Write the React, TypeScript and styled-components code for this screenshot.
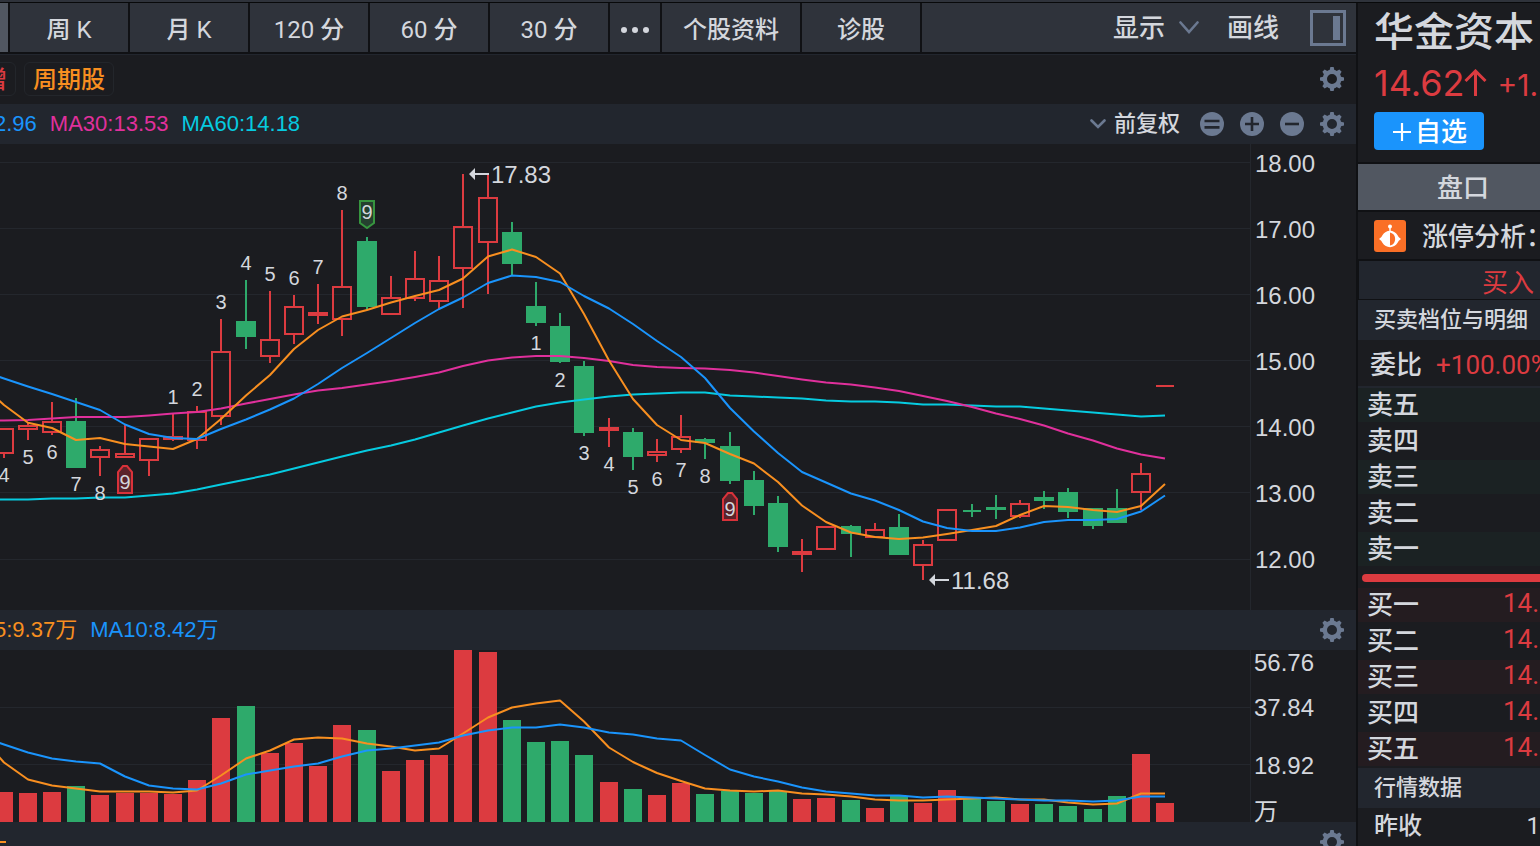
import React from 'react';
import styled, { createGlobalStyle } from 'styled-components';

const color = {
  base: '#1b1c20',
  bar: '#22262e',
  toolbar: '#2f333b',
  edge: '#101114',
  active: '#515761',
  grid: '#24272d',
  text: '#d4d7dd',
  icon: '#6b7991',
  red: '#dc3b40',
  green: '#2eaa6b',
  orange: '#f88f20',
  blue: '#1a94fc',
  magenta: '#e0309c',
  cyan: '#06cbe0',
};

const helvetica = '"Liberation Sans", "Noto Sans CJK SC", sans-serif';
const roboto = 'Roboto, "Noto Sans CJK SC", sans-serif';
const inter = 'Inter, "Noto Sans CJK SC", sans-serif';

const GlobalStyle = createGlobalStyle`
  *, *::before, *::after { box-sizing: border-box; }
  body {
    margin: 0;
    background: ${color.base};
    color: ${color.text};
    font-family: ${roboto};
    font-weight: 500;
  }
  button { font: inherit; color: inherit; border: 0; padding: 0; background: none; cursor: pointer; }
  svg { flex: none; }
`;

/* ---------- frame ---------- */

const Page = styled.div`
  display: flex;
  flex-direction: column;
  height: 100vh;
  overflow: hidden;
`;

const TopEdge = styled.div`
  flex: none;
  height: 3px;
  background: ${color.toolbar};
  border-bottom: 1px solid #08090a;
`;

const Body = styled.div`
  flex: 1;
  display: flex;
  min-height: 0;
`;

const Main = styled.main`
  flex: 1;
  min-width: 0;
  overflow: hidden;
`;

const Side = styled.aside`
  flex: 0 0 184px;
  overflow: hidden;
  white-space: nowrap;
  border-left: 2px solid ${color.edge};
`;

/* ---------- toolbar ---------- */

const Toolbar = styled.nav`
  display: flex;
  height: 51px;
  background: ${color.toolbar};
  border-bottom: 2px solid ${color.edge};
`;

const Tab = styled.button<{ $width: number; $active?: boolean }>`
  flex: none;
  display: flex;
  align-items: center;
  justify-content: center;
  gap: 6px;
  width: ${(p) => p.$width}px;
  padding-top: 4px;
  border-right: 2px solid ${color.edge};
  background: ${(p) => (p.$active ? color.active : 'transparent')};
  font-size: 24px;
  line-height: 40px;
`;

const Latin = styled.span`
  font-weight: 400;
`;

const ToolbarEnd = styled.div`
  display: flex;
  align-items: center;
  margin-left: auto;
  padding-right: 10px;
  font-size: 26px;
  line-height: 48px;
`;

const ToolButton = styled.button<{ $space: number }>`
  display: flex;
  align-items: center;
  gap: 14px;
  margin-right: ${(p) => p.$space}px;
`;

const PlainButton = styled.button`
  display: flex;
`;

/* ---------- bars ---------- */

const TagRow = styled.div`
  display: flex;
  align-items: center;
  gap: 8px;
  height: 50px;
  padding: 0 12px 2px 0;
  border-top: 1px solid ${color.bar};
`;

const Tag = styled.span<{ $color: string; $cut?: boolean }>`
  margin-left: ${(p) => (p.$cut ? '-26px' : '0')};
  padding: 2px 8px 0;
  border: 1px solid #23262b;
  border-radius: 6px;
  color: ${(p) => p.$color};
  font-size: 24px;
  line-height: 30px;
`;

const Bar = styled.div`
  display: flex;
  align-items: center;
  height: 40px;
  padding-right: 12px;
  background: ${color.bar};
`;

const Legend = styled.div`
  display: flex;
  gap: 13px;
  margin-left: -6px;
  font-family: ${helvetica};
  font-size: 22px;
  font-weight: 400;
  line-height: 40px;
  white-space: nowrap;
`;

const LegendItem = styled.span<{ $color: string }>`
  color: ${(p) => p.$color};
`;

const LegendDash = styled.span`
  width: 6px;
  height: 2px;
  background: ${color.orange};
`;

const BarEnd = styled.div`
  display: flex;
  align-items: center;
  gap: 16px;
  margin-left: auto;
`;

const AdjustButton = styled.button`
  display: flex;
  align-items: center;
  gap: 8px;
  margin-right: 4px;
  font-size: 22px;
  line-height: 38px;
`;

/* ---------- charts ---------- */

const ChartRow = styled.section`
  display: flex;
`;

const Plot = styled.div`
  flex: 1;
  min-width: 0;
  display: flex;
  justify-content: flex-end;
  overflow: hidden;
`;

const PlotSvg = styled.svg`
  display: block;
  overflow: visible;
  font-family: ${helvetica};
  font-weight: 400;
`;

const PriceAxis = styled.div`
  flex: 0 0 106px;
  display: flex;
  flex-direction: column;
  gap: 38px;
  padding: 6px 0 0 4px;
  border-left: 1px solid ${color.grid};
  font-family: ${helvetica};
  font-size: 24px;
  font-weight: 400;
  line-height: 28px;
`;

const VolumeAxis = styled.div`
  flex: 0 0 106px;
  display: grid;
  grid-template-rows: 26px 64px 52px 30px;
  align-items: center;
  padding-left: 3px;
  border-left: 1px solid ${color.grid};
  font-family: ${helvetica};
  font-size: 24px;
  font-weight: 400;
  line-height: 24px;
`;

const Unit = styled.span`
  align-self: end;
  line-height: 20px;
`;

/* ---------- side panel ---------- */

const Head = styled.header`
  padding: 0 0 12px 16px;
  border-bottom: 2px solid ${color.edge};
`;

const StockName = styled.h1`
  margin: 0;
  font-size: 40px;
  font-weight: 500;
  line-height: 60px;
`;

const PriceLine = styled.div`
  display: flex;
  align-items: baseline;
  gap: 9px;
  height: 49px;
  color: ${color.red};
  font-family: ${inter};
  font-weight: 400;
  line-height: 40px;
`;

const Price = styled.strong`
  display: flex;
  align-items: baseline;
  font-size: 36px;
  font-weight: 400;
`;

const Change = styled.span`
  font-size: 30px;
`;

const AddButton = styled.button`
  display: flex;
  align-items: center;
  justify-content: center;
  gap: 4px;
  width: 110px;
  height: 38px;
  padding: 2px 0 0 2px;
  border-radius: 4px;
  background: ${color.blue};
  color: #fff;
  font-size: 26px;
  line-height: 36px;
`;

const SideTab = styled.button`
  display: block;
  width: 100%;
  height: 48px;
  padding-left: 28px;
  border-bottom: 2px solid ${color.edge};
  background: ${color.active};
  font-size: 26px;
  line-height: 48px;
`;

const Analysis = styled.a`
  display: flex;
  align-items: center;
  gap: 16px;
  height: 49px;
  padding-left: 16px;
  border-bottom: 2px solid ${color.edge};
  color: inherit;
  font-size: 26px;
  line-height: 44px;
  text-decoration: none;
`;

const AnalysisText = styled.span`
  padding-top: 3px;
`;

const BuyButton = styled.button`
  display: block;
  width: 100%;
  height: 39px;
  padding-left: 123px;
  border-left: 1px solid ${color.edge};
  border-bottom: 1px solid ${color.edge};
  background: ${color.bar};
  color: ${color.red};
  font-size: 26px;
  font-weight: 400;
  line-height: 44px;
  text-align: left;
`;

const SectionTitle = styled.h2`
  margin: 0;
  padding-left: 16px;
  background: ${color.bar};
  font-size: 22px;
  font-weight: 500;
  line-height: 40px;
`;

const Ratio = styled.div`
  display: flex;
  gap: 14px;
  padding: 4px 0 0 12px;
  border-bottom: 2px solid ${color.bar};
  font-size: 26px;
  line-height: 42px;
`;

const Positive = styled.span`
  color: ${color.red};
  font-weight: 400;
`;

const Book = styled.table<{ $tint: string }>`
  width: 100%;
  border-spacing: 0;
  table-layout: fixed;
  font-size: 26px;
  line-height: 34px;
  th, td { padding: 0; border-bottom: 2px solid ${color.base}; text-align: left; vertical-align: top; }
  th { width: 145px; padding-left: 9px; font-weight: 500; }
  td { color: ${color.red}; font-weight: 400; line-height: 30px; }
  tr:nth-child(odd) { background: ${(p) => p.$tint}; }
`;

const Balance = styled.div`
  height: 8px;
  margin: 6px 0 6px 4px;
  border-radius: 4px 0 0 4px;
  background: ${color.red};
`;

const QuoteRow = styled.div`
  display: flex;
  justify-content: space-between;
  padding-left: 16px;
  font-size: 24px;
  line-height: 36px;
`;

/* ---------- icons ---------- */

const Gear = () => (
  <svg width="24" height="24" viewBox="-12 -12 24 24" aria-hidden="true">
    <circle r="7.2" fill="none" stroke={color.icon} strokeWidth="4.4" />
    {[0, 45, 90, 135, 180, 225, 270, 315].map((a) => (
      <path key={a} d="M-2.6 -8 L-1.6 -12 H1.6 L2.6 -8 Z" fill={color.icon} transform={`rotate(${a})`} />
    ))}
  </svg>
);

const GearButton = ({ label }: { label: string }) => (
  <PlainButton aria-label={label}>
    <Gear />
  </PlainButton>
);

const RoundButton = ({ label, d }: { label: string; d: string }) => (
  <PlainButton aria-label={label}>
    <svg width="24" height="24" viewBox="0 0 24 24" aria-hidden="true">
      <circle cx="12" cy="12" r="12" fill={color.icon} />
      <path d={d} fill="none" stroke={color.bar} strokeWidth="2.6" />
    </svg>
  </PlainButton>
);

const Chevron = ({ width, height }: { width: number; height: number }) => (
  <svg width={width} height={height} viewBox={`0 0 ${width} ${height}`} aria-hidden="true">
    <path
      d={`M1.5 1.5 L${width / 2} ${height - 2} L${width - 1.5} 1.5`}
      fill="none"
      stroke={color.icon}
      strokeWidth="2.6"
      strokeLinecap="round"
    />
  </svg>
);

const PanelIcon = () => (
  <svg width="36" height="36" viewBox="0 0 36 36" aria-hidden="true">
    <rect x="1.5" y="1.5" width="33" height="33" fill="none" stroke={color.icon} strokeWidth="3" />
    <rect x="23" y="6" width="7" height="24" fill={color.icon} />
  </svg>
);

const RobotIcon = () => (
  <svg width="32" height="32" viewBox="0 0 32 32" aria-hidden="true">
    <rect width="32" height="32" rx="3" fill="#fa6f26" />
    <circle cx="16" cy="6.4" r="2" fill="#fff" />
    <path d="M16 7 V12" stroke="#fff" strokeWidth="1.4" />
    <path
      d="M5 19 Q7.6 17.6 8.6 15 A8.6 8.6 0 0 1 23.4 15 Q24.4 17.6 27 19 Q24.4 20.4 23.4 23 A8.6 8.6 0 0 1 8.6 23 Q7.6 20.4 5 19 Z"
      fill="#fff"
    />
    <path d="M16 12.4 A6.8 6.8 0 0 1 16 25.6 Z" fill="#fa6f26" />
  </svg>
);

const UpArrow = () => (
  <svg width="24" height="27" viewBox="0 0 24 27" aria-hidden="true">
    <path d="M11.5 27 V2.5 M1.5 12 L11.5 2 L21.5 12" fill="none" stroke={color.red} strokeWidth="3" />
  </svg>
);

const PlusIcon = () => (
  <svg width="18" height="18" viewBox="0 0 18 18" aria-hidden="true">
    <path d="M9 0 V18 M0 9 H18" stroke="#fff" strokeWidth="2.2" />
  </svg>
);

/* ---------- chart data, in plot coordinates ---------- */

const centre = (i: number) => Math.floor(4.1 + i * 24.2);

type Candle = ['r' | 'g', number, number, number, number];

// direction, high, body top, body bottom, low
const candles: Candle[] = [
  ['r', 428, 428, 454, 458], ['r', 423, 425, 430, 440], ['r', 402, 421, 433, 435], ['g', 398, 421, 468, 468],
  ['r', 446, 449, 458, 476], ['r', 425, 453, 458, 458], ['r', 438, 438, 461, 476], ['r', 413, 436, 440, 441],
  ['r', 406, 411, 441, 449], ['r', 319, 351, 417, 425], ['g', 280, 321, 337, 349], ['r', 291, 339, 357, 363],
  ['r', 295, 306, 335, 344], ['r', 284, 312, 316, 324], ['r', 210, 286, 320, 336], ['g', 237, 241, 307, 310],
  ['r', 276, 297, 315, 315], ['r', 251, 278, 299, 301], ['r', 256, 280, 302, 309], ['r', 174, 226, 269, 308],
  ['r', 175, 197, 243, 294], ['g', 222, 232, 264, 276], ['g', 282, 306, 323, 326], ['g', 313, 326, 362, 363],
  ['g', 361, 366, 433, 436], ['r', 418, 427, 431, 447], ['g', 428, 432, 457, 470], ['r', 439, 451, 456, 462],
  ['r', 415, 436, 450, 453], ['g', 438, 439, 443, 459], ['g', 432, 446, 481, 484], ['g', 471, 480, 506, 515],
  ['g', 496, 503, 547, 552], ['r', 539, 551, 555, 572], ['r', 526, 526, 550, 550], ['g', 525, 526, 534, 557],
  ['r', 523, 529, 538, 538], ['g', 514, 527, 555, 555], ['r', 540, 544, 566, 580], ['r', 509, 509, 541, 541],
  ['g', 504, 510, 512, 517], ['g', 495, 507, 510, 519], ['r', 500, 503, 517, 518], ['g', 491, 497, 501, 509],
  ['g', 488, 492, 512, 518], ['g', 508, 508, 526, 529], ['g', 489, 508, 523, 523], ['r', 463, 473, 493, 510],
  ['r', 385, 385, 387, 387],
];

const ma5 = [
  405, 422.7, 428, 440, 438, 444, 446.5, 449, 439, 419, 395.5, 375, 349, 330, 316.5, 310, 302.5, 296, 290, 278.5,
  256.5, 249.5, 257, 273.5, 314, 360.5, 399, 425, 440, 443, 454, 463.5, 482, 505.5, 522, 532.5, 537, 539, 537.5,
  534, 530, 526, 515, 506, 507, 510, 512, 506, 484,
];
const ma10 = [
  378.5, 386.5, 394, 402, 410, 424.5, 434, 438, 439, 429, 419.5, 409.5, 398.5, 384, 368, 353, 338, 323, 309, 297.5,
  283, 275.5, 277, 282, 296, 308.5, 324, 341, 357, 378, 408, 431.5, 453, 472, 482.5, 493.5, 500.5, 510, 521.5, 528,
  531, 531, 527.5, 522, 520, 520, 519, 511.5, 495.5,
];
const ma30 = [
  420.5, 420, 418.5, 417, 417, 417, 415.5, 413.5, 412, 408.5, 403.5, 399, 394.5, 390.5, 388, 384.5, 381, 377, 372.5,
  366, 360.5, 357.5, 356, 356, 358, 361, 365, 367, 368, 368.5, 370, 372.5, 376, 379.5, 382.5, 384.5, 387.5, 391, 396,
  401, 407, 413.5, 419, 425.5, 433.5, 440.5, 448.5, 454.5, 458.5,
];
const ma60 = [
  499.5, 499.5, 498.5, 498.5, 497.5, 497.5, 495.5, 493.5, 489.5, 484.5, 479.5, 474.5, 468.5, 462.5, 456.5, 450.5, 445.5,
  439.5, 432.5, 425.5, 418.5, 412.5, 406.5, 402.5, 399.5, 396.5, 394.5, 393.5, 392.5, 392.5, 395.5, 396.5, 397.5,
  398.5, 400.5, 401.5, 401.5, 402.5, 404.5, 404.5, 405.5, 406.5, 406.5, 408.5, 410.5, 412.5, 414.5, 416.5, 415.5,
];

const volumeTops = [
  792, 793, 792, 786, 795, 793, 793, 794, 780, 718, 706, 753, 743, 766, 725, 730, 771, 760, 755, 650, 652, 720, 742,
  741, 755, 782, 789, 795, 783, 794, 791, 793, 791, 799, 798, 800, 808, 796, 803, 790, 798, 801, 804, 804, 806, 809,
  796, 754, 803,
];
const volumeMa5 = [
  762.5, 779.5, 785.5, 788.5, 791.5, 791.5, 791.5, 792.5, 790.5, 775.5, 758.5, 750.5, 739.5, 737.5, 738.5, 743.5,
  746.5, 750.5, 748.5, 733.5, 717.5, 707.5, 703.5, 700.5, 721.5, 747.5, 762, 773, 781, 788.5, 790.5, 791.5, 790.5,
  793.5, 794.5, 796.5, 799.5, 800.5, 800.5, 799.5, 798.5, 797.5, 799.5, 799.5, 802.5, 804.5, 803.5, 793.5, 793.5,
];
const volumeMa10 = [
  744.5, 752.5, 758.5, 761.5, 763.5, 776.5, 785.5, 788.5, 789.5, 783.5, 774.5, 770.5, 766.5, 763.5, 756.5, 750.5,
  748.5, 745.5, 742.5, 735.5, 730.5, 727.5, 727.5, 724.5, 727.5, 732.5, 734.5, 738.5, 740.5, 755, 769.5, 776.5, 781.5,
  787.5, 791.5, 793.5, 795.5, 795.5, 797.5, 796.5, 797.5, 798.5, 799.5, 800.5, 800.5, 801.5, 800.5, 796.5, 796.5,
];

// candle index, digit, baseline
const counts: [number, number, number][] = [
  [0, 4, 482], [1, 5, 464], [2, 6, 459], [3, 7, 491], [4, 8, 500], [5, 9, 489], [7, 1, 404], [8, 2, 396],
  [9, 3, 309], [10, 4, 270], [11, 5, 281], [12, 6, 285], [13, 7, 274], [14, 8, 200], [15, 9, 219],
  [22, 1, 350], [23, 2, 387], [24, 3, 460], [25, 4, 471], [26, 5, 494], [27, 6, 486], [28, 7, 477], [29, 8, 483],
  [30, 9, 516],
];

const Line = ({ values, stroke, lead }: { values: number[]; stroke: string; lead: number }) => (
  <polyline
    points={[`-20,${lead}`, ...values.map((v, i) => `${centre(i)},${v}`)].join(' ')}
    fill="none"
    stroke={stroke}
    strokeWidth="2"
    strokeLinejoin="round"
  />
);

const GridLine = ({ y }: { y: number }) => <rect x="-3000" y={y} width="4250" height="1" fill={color.grid} />;

const CandleMark = ({ index, data }: { index: number; data: Candle }) => {
  const [kind, high, top, bottom, low] = data;
  const x = centre(index);
  const height = bottom - top;
  const fill = kind === 'r' ? color.red : color.green;
  const half = height < 3 ? 9 : 10;
  const hollow = kind === 'r' && height > 4;
  return (
    <g fill={fill}>
      {high < top && <rect x={x - 1} y={high} width="2" height={top - high} />}
      {low > bottom && <rect x={x - 1} y={bottom} width="2" height={low - bottom} />}
      {hollow ? (
        <rect x={x - 9} y={top + 1} width="18" height={height - 2} fill="none" stroke={fill} strokeWidth="2" />
      ) : (
        <rect x={x - half} y={top} width={half * 2} height={height} />
      )}
    </g>
  );
};

const ArrowNote = ({ x, y, text }: { x: number; y: number; text: string }) => (
  <g fill={color.text}>
    <path d={`M${x} ${y} l6 -6 v5 h14 v2 h-14 v5 Z`} />
    <text x={x + 22} y={y + 9} fontSize="24">{text}</text>
  </g>
);

const PricePlot = () => (
  <PlotSvg width="1250" height="466" viewBox="0 144 1250 466" role="img" aria-label="K线图">
    {[162, 228, 294, 360, 426, 492, 559].map((y) => <GridLine key={y} y={y} />)}
    {candles.map((c, i) => <CandleMark key={i} index={i} data={c} />)}
    <Line values={ma60} stroke={color.cyan} lead={500} />
    <Line values={ma30} stroke={color.magenta} lead={421} />
    <Line values={ma5} stroke={color.orange} lead={383} />
    <Line values={ma10} stroke={color.blue} lead={370} />
    <g strokeWidth="2">
      <path d="M118 493 V472 L123 466 H127 L132 472 V493 Z" fill="#5b232a" stroke="#d9323a" />
      <path d="M723 520 V499 L728 493 H732 L737 499 V520 Z" fill="#5b232a" stroke="#d9323a" />
      <path d="M360 201 V223 L367 228 L374 223 V201 Z" fill="#25402f" stroke="#37953f" />
    </g>
    <g fill={color.text} fontSize="20" textAnchor="middle">
      {counts.map(([i, digit, y]) => <text key={i} x={centre(i)} y={y}>{digit}</text>)}
    </g>
    <ArrowNote x={469} y={174} text="17.83" />
    <ArrowNote x={929} y={580} text="11.68" />
  </PlotSvg>
);

const VolumePlot = () => (
  <PlotSvg width="1250" height="172" viewBox="0 650 1250 172" role="img" aria-label="成交量">
    <GridLine y={707} />
    <GridLine y={764} />
    {volumeTops.map((top, i) => (
      <rect
        key={i}
        x={centre(i) - 9}
        y={top}
        width="18"
        height={822 - top}
        fill={candles[i][0] === 'r' ? color.red : color.green}
      />
    ))}
    <Line values={volumeMa5} stroke={color.orange} lead={735} />
    <Line values={volumeMa10} stroke={color.blue} lead={736} />
  </PlotSvg>
);

/* ---------- page ---------- */

const minutes = ['120', '60', '30'];
const prices = ['18.00', '17.00', '16.00', '15.00', '14.00', '13.00', '12.00'];
const asks = ['卖五', '卖四', '卖三', '卖二', '卖一'];
const bids = [
  ['买一', '14.6'],
  ['买二', '14.6'],
  ['买三', '14.6'],
  ['买四', '14.5'],
  ['买五', '14.5'],
];

export default function App() {
  return (
    <Page>
      <GlobalStyle />
      <TopEdge />
      <Body>
        <Main>
          <Toolbar>
            <Tab $width={10} $active aria-label="日K" />
            <Tab $width={120}>周<Latin>K</Latin></Tab>
            <Tab $width={120}>月<Latin>K</Latin></Tab>
            {minutes.map((m) => (
              <Tab key={m} $width={120}>
                <Latin>{m}</Latin>分
              </Tab>
            ))}
            <Tab $width={52} aria-label="更多">
              <svg width="30" height="6" viewBox="0 0 30 6" aria-hidden="true">
                <g fill={color.text}>
                  <circle cx="4" cy="3" r="3" />
                  <circle cx="15" cy="3" r="3" />
                  <circle cx="26" cy="3" r="3" />
                </g>
              </svg>
            </Tab>
            <Tab $width={140}>个股资料</Tab>
            <Tab $width={120}>诊股</Tab>
            <ToolbarEnd>
              <ToolButton $space={28}>
                显示
                <Chevron width={20} height={13} />
              </ToolButton>
              <ToolButton $space={31}>画线</ToolButton>
              <PlainButton aria-label="侧栏">
                <PanelIcon />
              </PlainButton>
            </ToolbarEnd>
          </Toolbar>

          <TagRow>
            <Tag $color={color.red} $cut>增</Tag>
            <Tag $color={color.orange}>周期股</Tag>
            <BarEnd>
              <GearButton label="标签设置" />
            </BarEnd>
          </TagRow>

          <Bar>
            <Legend>
              <LegendItem $color={color.blue}>2.96</LegendItem>
              <LegendItem $color={color.magenta}>MA30:13.53</LegendItem>
              <LegendItem $color={color.cyan}>MA60:14.18</LegendItem>
            </Legend>
            <BarEnd>
              <AdjustButton>
                <Chevron width={16} height={10} />
                前复权
              </AdjustButton>
              <RoundButton label="还原" d="M4.5 9 H19.5 M4.5 15.4 H19.5" />
              <RoundButton label="放大" d="M5 12 H19 M12 5 V19" />
              <RoundButton label="缩小" d="M5 12 H19" />
              <GearButton label="均线设置" />
            </BarEnd>
          </Bar>

          <ChartRow>
            <Plot><PricePlot /></Plot>
            <PriceAxis>
              {prices.map((p) => <span key={p}>{p}</span>)}
            </PriceAxis>
          </ChartRow>

          <Bar>
            <Legend>
              <LegendItem $color={color.orange}>5:9.37万</LegendItem>
              <LegendItem $color={color.blue}>MA10:8.42万</LegendItem>
            </Legend>
            <BarEnd>
              <GearButton label="成交量设置" />
            </BarEnd>
          </Bar>

          <ChartRow>
            <Plot><VolumePlot /></Plot>
            <VolumeAxis>
              <span>56.76</span>
              <span>37.84</span>
              <span>18.92</span>
              <Unit>万</Unit>
            </VolumeAxis>
          </ChartRow>

          <Bar>
            <LegendDash />
            <BarEnd>
              <GearButton label="指标设置" />
            </BarEnd>
          </Bar>
        </Main>

        <Side>
          <Head>
            <StockName>华金资本</StockName>
            <PriceLine>
              <Price>
                14.62
                <UpArrow />
              </Price>
              <Change>+1.</Change>
            </PriceLine>
            <AddButton>
              <PlusIcon />
              自选
            </AddButton>
          </Head>
          <SideTab>盘口</SideTab>
          <Analysis href="#analysis">
            <RobotIcon />
            <AnalysisText>涨停分析：</AnalysisText>
          </Analysis>
          <BuyButton>买入</BuyButton>
          <SectionTitle>买卖档位与明细</SectionTitle>
          <Ratio>
            <span>委比</span>
            <Positive>+100.00%</Positive>
          </Ratio>
          <Book $tint="#1b2223">
            <tbody>
              {asks.map((name) => (
                <tr key={name}>
                  <th scope="row">{name}</th>
                  <td />
                </tr>
              ))}
            </tbody>
          </Book>
          <Balance />
          <Book $tint="#241c20">
            <tbody>
              {bids.map(([name, price]) => (
                <tr key={name}>
                  <th scope="row">{name}</th>
                  <td>{price}</td>
                </tr>
              ))}
            </tbody>
          </Book>
          <SectionTitle>行情数据</SectionTitle>
          <QuoteRow>
            <span>昨收</span>
            <Latin>1</Latin>
          </QuoteRow>
        </Side>
      </Body>
    </Page>
  );
}
